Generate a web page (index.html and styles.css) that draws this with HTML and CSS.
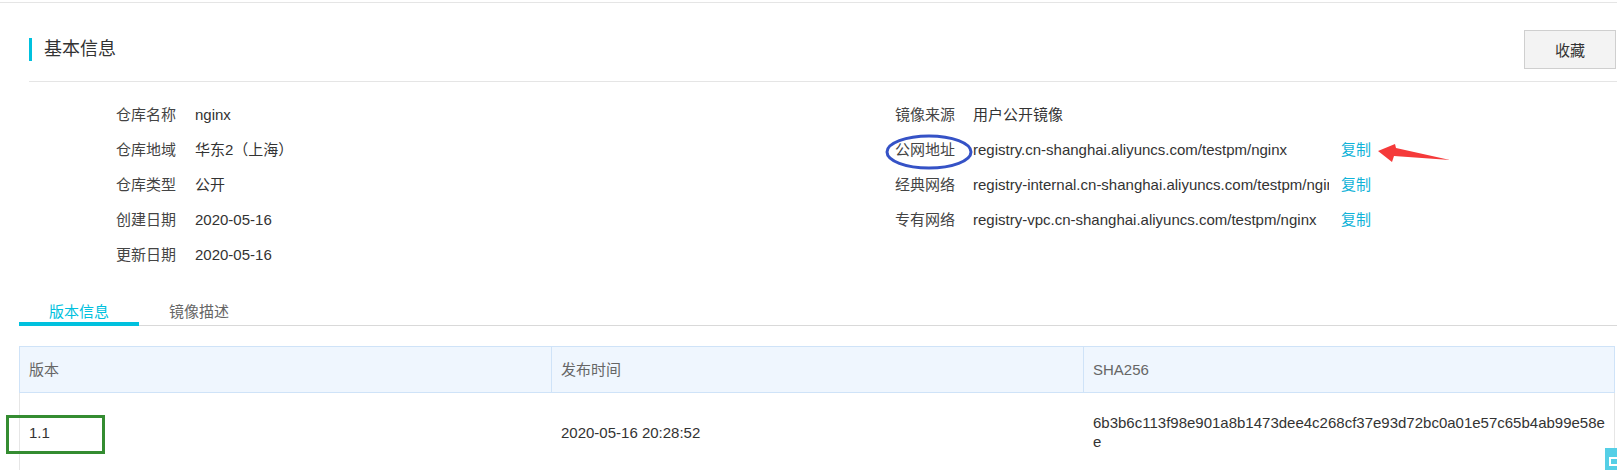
FILE: index.html
```html
<!DOCTYPE html>
<html lang="zh-CN">
<head>
<meta charset="utf-8">
<title>基本信息</title>
<link rel="stylesheet" href="styles.css">
</head>
<body>
<div class="page">
  <div class="topline"></div>
  <header class="section-head">
    <div class="title"><span class="bar"></span><h2>基本信息</h2></div>
    <button class="btn" type="button">收藏</button>
  </header>

  <div class="info">
    <dl class="info-col">
      <div class="row"><dt>仓库名称</dt><dd>nginx</dd></div>
      <div class="row"><dt>仓库地域</dt><dd>华东2（上海）</dd></div>
      <div class="row"><dt>仓库类型</dt><dd>公开</dd></div>
      <div class="row"><dt>创建日期</dt><dd>2020-05-16</dd></div>
      <div class="row"><dt>更新日期</dt><dd>2020-05-16</dd></div>
    </dl>
    <dl class="info-col right">
      <div class="row"><dt>镜像来源</dt><dd>用户公开镜像</dd></div>
      <div class="row"><dt>公网地址</dt><dd class="url">registry.cn-shanghai.aliyuncs.com/testpm/nginx</dd><a class="copy">复制</a></div>
      <div class="row"><dt>经典网络</dt><dd class="url">registry-internal.cn-shanghai.aliyuncs.com/testpm/nginx</dd><a class="copy">复制</a></div>
      <div class="row"><dt>专有网络</dt><dd class="url">registry-vpc.cn-shanghai.aliyuncs.com/testpm/nginx</dd><a class="copy">复制</a></div>
    </dl>
  </div>

  <div class="tabs">
    <div class="tab active">版本信息</div>
    <div class="tab">镜像描述</div>
  </div>

  <div class="table">
    <div class="thead">
      <div class="th">版本</div>
      <div class="th sep">发布时间</div>
      <div class="th sep">SHA256</div>
    </div>
    <div class="tbody">
      <div class="td">1.1</div>
      <div class="td">2020-05-16 20:28:52</div>
      <div class="td sha">6b3b6c113f98e901a8b1473dee4c268cf37e93d72bc0a01e57c65b4ab99e58ee</div>
    </div>
  </div>
</div>

<svg class="mark-ellipse" width="92" height="40" viewBox="0 0 92 40"><ellipse cx="45" cy="19" rx="42" ry="16" fill="none" stroke="#3552c6" stroke-width="3"/></svg>
<svg class="mark-arrow" width="80" height="26" viewBox="0 0 80 26"><polygon points="3,11 20,4 21,8 75,20 19,16 17,22" fill="#f53a3a"/></svg>
<div class="mark-box"></div>
<div class="float-btn"><span class="float-icon"></span></div>
</body>
</html>
```
FILE: styles.css
```css
* { box-sizing: border-box; }
body {
  margin: 0;
  background: #fff;
  color: #333;
  font-family: "Liberation Sans", "Noto Sans CJK SC", sans-serif;
  font-size: 15px;
  overflow: hidden;
}
.page { width: 1617px; }
.topline { margin-top: 2px; height: 1px; background: #e5e5e5; }

.section-head {
  margin-left: 29px;
  padding: 27px 1px 12px 0;
  display: flex;
  justify-content: space-between;
  align-items: center;
  border-bottom: 1px solid #e5e5e5;
}
.title { display: flex; align-items: center; }
.bar { width: 3px; height: 23px; background: #00c1de; }
.title h2 {
  margin: 0 0 0 12px;
  font-size: 18px;
  font-weight: normal;
  line-height: 23px;
  color: #333;
}
.btn {
  width: 92px;
  height: 39px;
  background: #f3f3f3;
  border: 1px solid #cfcfcf;
  font-family: inherit;
  font-size: 15px;
  color: #333;
  padding: 0;
}

.info {
  margin-left: 116px;
  padding-top: 15px;
  display: grid;
  grid-template-columns: 779px 1fr;
}
.info-col { margin: 0; }
.row { display: flex; align-items: center; height: 35px; line-height: 20px; }
.row dt { width: 79px; color: #444; }
.right .row dt { width: 78px; }
.row dd { margin: 0; color: #333; }
.url { width: 356px; white-space: nowrap; overflow: hidden; }
.copy { margin-left: 12px; color: #0fb3d8; cursor: pointer; }

.tabs {
  margin: 30px 0 0 19px;
  display: flex;
  border-bottom: 1px solid #d9d9d9;
}
.tab {
  width: 120px;
  text-align: center;
  line-height: 20px;
  color: #666;
  border-bottom: 4px solid transparent;
  margin-bottom: -1px;
}
.tab.active { color: #00c1de; border-bottom-color: #00c1de; }

.table { margin: 20px 0 0 19px; width: 1596px; font-size: 15px; }
.thead {
  display: grid;
  grid-template-columns: 531px 532px 531px;
  background: #eff6fe;
  border: 1px solid #cfe3f8;
}
.th { height: 45px; line-height: 45px; padding: 0 9px; color: #666; }
.th.sep { border-left: 1px solid #cfe3f8; }
.tbody {
  display: grid;
  grid-template-columns: 531px 532px 531px;
  align-items: center;
  border-left: 1px solid #e6e6e6;
  border-right: 1px solid #e6e6e6;
}
.td { padding: 20px 9px; line-height: 19px; color: #333; }
.td + .td { padding-left: 10px; }
.td.sha { padding-right: 6px; word-break: break-all; }

.mark-ellipse { position: absolute; left: 884px; top: 133px; }
.mark-arrow { position: absolute; left: 1375px; top: 140px; }
.mark-box {
  position: absolute;
  left: 6px; top: 415px;
  width: 99px; height: 39px;
  border: 3px solid #348c31;
}
.float-btn {
  position: absolute;
  left: 1605px; top: 448px;
  width: 20px; height: 30px;
  background: #55cfe6;
}
.float-icon {
  position: absolute;
  left: 4px; top: 9px;
  width: 12px; height: 9px;
  border: 2px solid #fff;
}
```
